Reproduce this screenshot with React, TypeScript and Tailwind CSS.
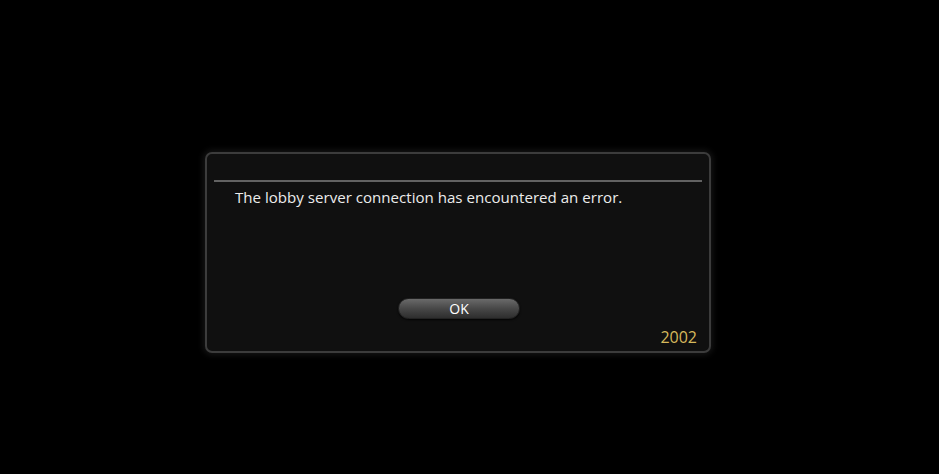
import React from "react";

export default function App() {
  return (
    <div className="w-[939px] h-[474px] bg-black overflow-hidden" style={{ fontFamily: '"Open Sans", "Noto Sans", sans-serif' }}>
      <div className="pt-[152px] pl-[205px]">
        <div className="w-[506px] h-[201px] rounded-[7px] border-2 border-[#3c3c3c] bg-[#101010] shadow-[0_0_6px_2px_rgba(60,60,60,0.35)] flex flex-col">
          <div className="h-[26px]" />
          <div className="mx-[7px] h-[2px] bg-[#626262]" />
          <div className="pl-[28px] pt-[4px] text-[15.1px] leading-[22px] text-[#ececec] font-medium">
            The lobby server connection has encountered an error.
          </div>
          <div className="flex justify-center pt-[90px] pl-[2px]">
            <div className="w-[122px] h-[21px] rounded-full bg-gradient-to-b from-[#6a6a6a] via-[#484848] to-[#2e2e2e] border border-[#222] shadow-[0_1px_2px_rgba(0,0,0,0.8)] flex items-center justify-center text-[14px] text-white leading-none">
              OK
            </div>
          </div>
          <div className="flex justify-end pr-[12px] pt-[8px] text-[16px] leading-[20px] text-[#d6b95c]">
            2002
          </div>
        </div>
      </div>
    </div>
  );
}
